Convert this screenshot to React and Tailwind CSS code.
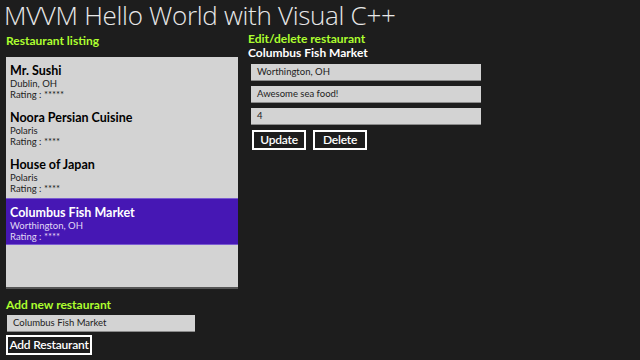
import React from "react";

const items = [
  { name: "Mr. Sushi", city: "Dublin, OH", rating: "*****" },
  { name: "Noora Persian Cuisine", city: "Polaris", rating: "****" },
  { name: "House of Japan", city: "Polaris", rating: "****" },
  { name: "Columbus Fish Market", city: "Worthington, OH", rating: "****", selected: true },
];

function TextBox({ value, className = "" }) {
  return (
    <div className={"h-[17px] bg-[#d3d3d3] border-b border-[#8a8a8a] flex items-center pl-[6px] text-[9.5px] text-[#222] whitespace-nowrap " + className}>
      {value}
    </div>
  );
}

function Button({ children, className = "" }) {
  return (
    <div className={"h-[20px] border-2 border-white flex items-center justify-center text-white text-[12px] font-semibold tracking-[-0.2px] whitespace-nowrap " + className}>
      {children}
    </div>
  );
}

export default function App() {
  return (
    <div
      className="w-[640px] h-[360px] bg-[#1d1d1d] overflow-hidden relative"
      style={{ fontFamily: 'Lato, "Open Sans", sans-serif' }}
    >
      <div
        className="pl-[4px] h-[32px] text-[26px] leading-[30px] font-light text-[#e8e8e8] tracking-[-0.3px] whitespace-nowrap"
        style={{ fontFamily: '"Open Sans", sans-serif' }}
      >
        MVVM Hello World with Visual C++
      </div>
      <div className="flex">
        <div className="w-[240px] pl-[6px] flex flex-col">
          <div className="text-[12px] font-bold text-[#adff2f] leading-[17px] h-[25px] whitespace-nowrap">Restaurant listing</div>
          <div className="w-[232px] h-[232px] bg-[#d3d3d3] border-b-2 border-[#555] flex flex-col">
            {items.map((it) => (
              <div
                key={it.name}
                className={
                  "h-[47px] pl-[4px] pt-[6px] flex flex-col " +
                  (it.selected ? "bg-[#4617b4] border-y border-[#7a5ad0] text-white pt-[5px]" : "text-black")
                }
              >
                <div className="text-[12.5px] font-bold leading-[15px] whitespace-nowrap">{it.name}</div>
                <div className={"text-[9.5px] leading-[11px] " + (it.selected ? "text-[#e0d8f4]" : "text-[#222]")}>{it.city}</div>
                <div className={"text-[9.5px] leading-[11px] " + (it.selected ? "text-[#e0d8f4]" : "text-[#222]")}>Rating : {it.rating}</div>
              </div>
            ))}
          </div>
          <div className="text-[12px] font-bold text-[#adff2f] leading-[15px] mt-[8px] whitespace-nowrap">Add new restaurant</div>
          <TextBox value="Columbus Fish Market" className="w-[188px] ml-[1px] mt-[3px]" />
          <Button className="w-[86px] mt-[3px]">Add Restaurant</Button>
        </div>
        <div className="pl-[8px] flex flex-col">
          <div className="text-[12px] font-bold text-[#adff2f] leading-[14px] whitespace-nowrap">Edit/delete restaurant</div>
          <div className="text-[12px] font-bold text-white leading-[14px] whitespace-nowrap">Columbus Fish Market</div>
          <div className="pl-[3px] flex flex-col gap-[5px] mt-[4px]">
            <TextBox value="Worthington, OH" className="w-[230px]" />
            <TextBox value="Awesome sea food!" className="w-[230px]" />
            <TextBox value="4" className="w-[230px]" />
          </div>
          <div className="flex gap-[7px] pl-[4px] mt-[5px]">
            <Button className="w-[54px]">Update</Button>
            <Button className="w-[54px]">Delete</Button>
          </div>
        </div>
      </div>
    </div>
  );
}
